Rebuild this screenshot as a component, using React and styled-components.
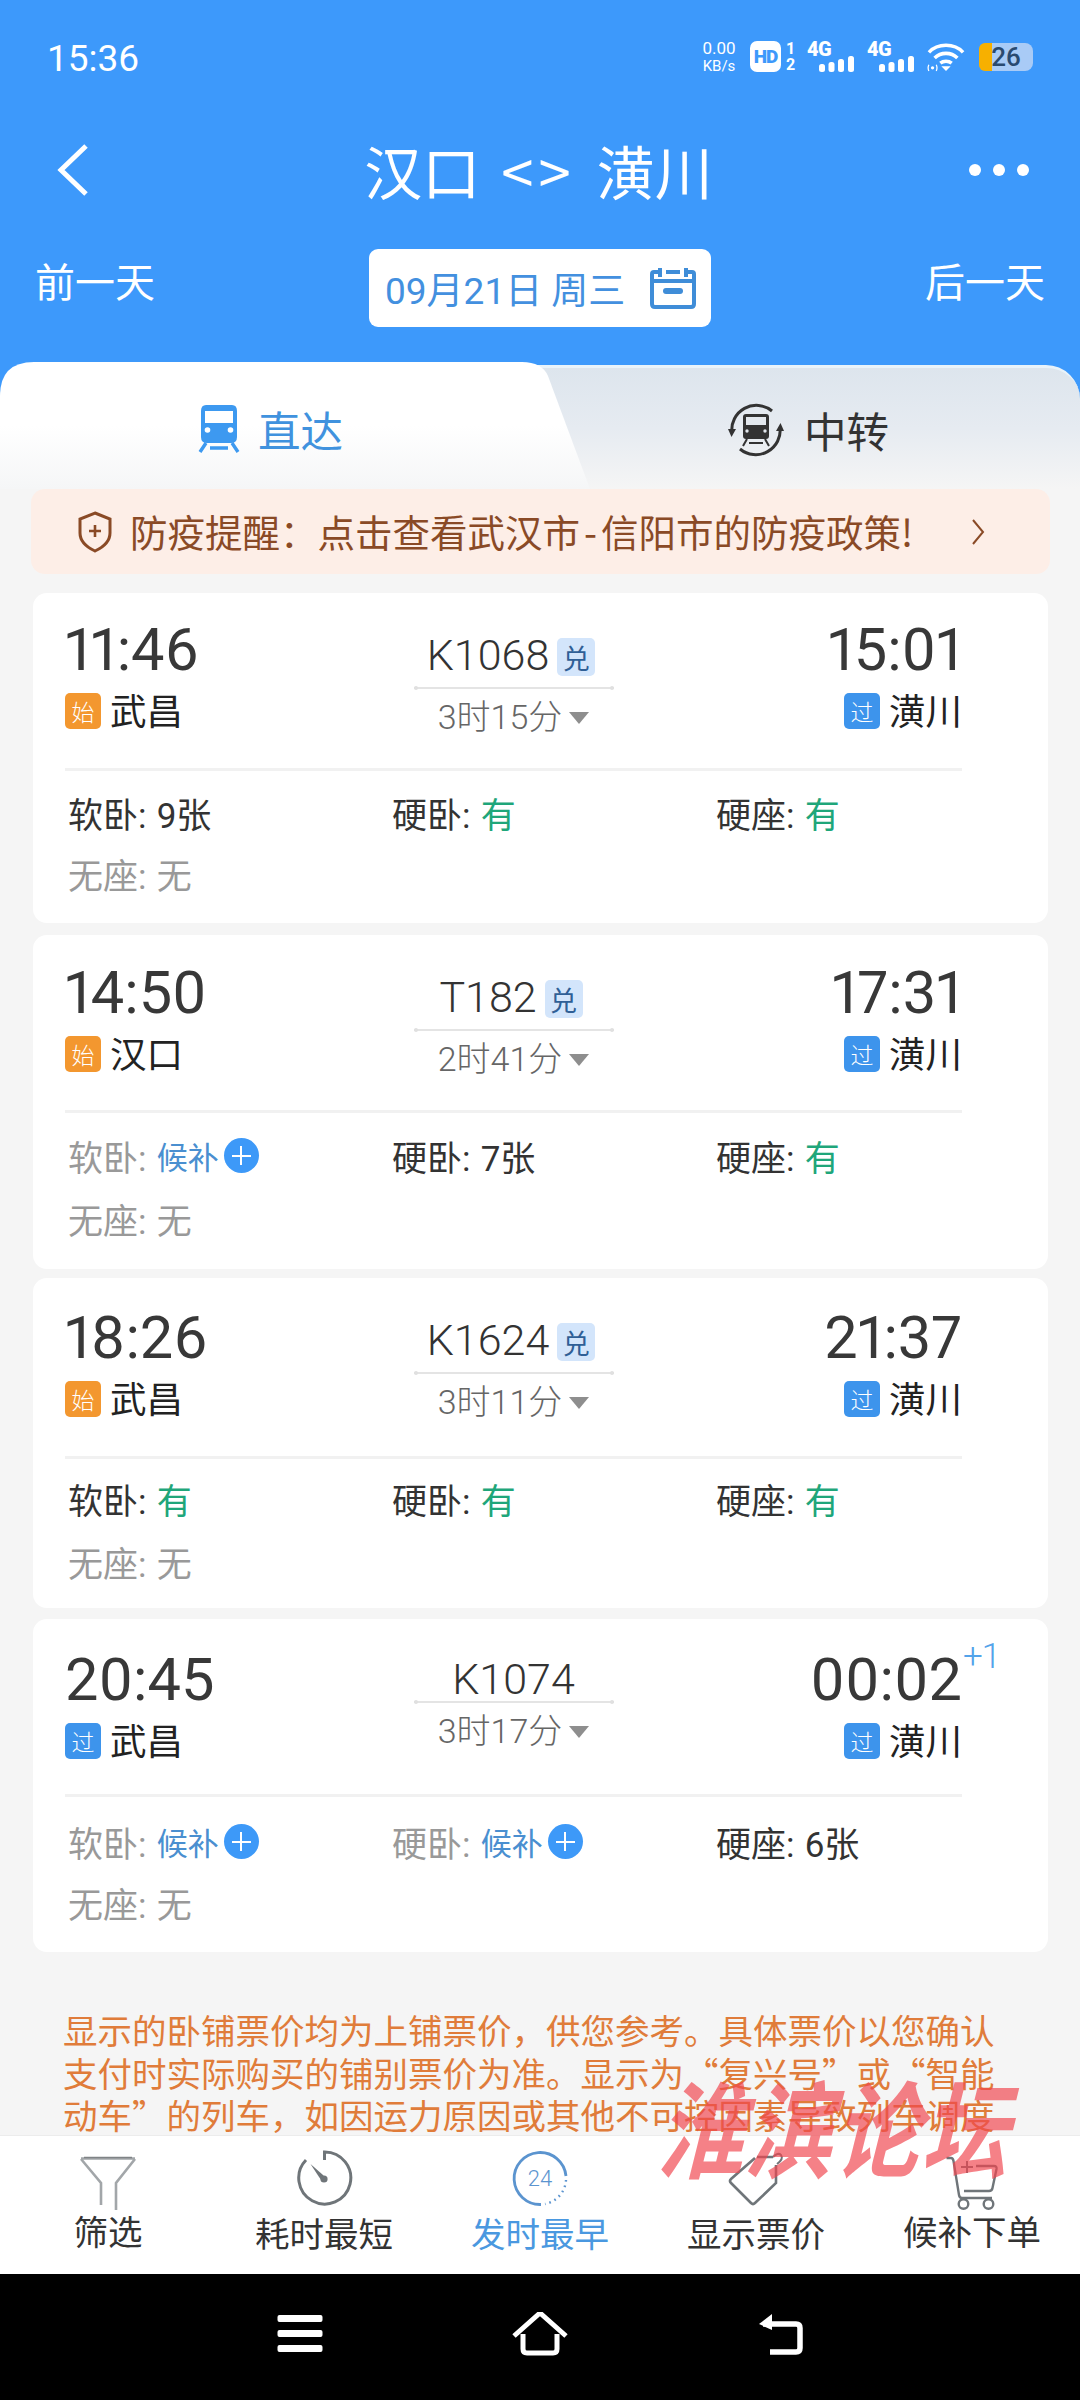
import React from "react";
import styled, { createGlobalStyle } from "styled-components";

const Global = createGlobalStyle`
  html, body { margin: 0; padding: 0; background: #f5f5f5; }
  body { font-family: Roboto, "Noto Sans CJK SC", sans-serif; }
  * { box-sizing: border-box; }
`;

const Page = styled.div`
  position: relative; width: 1080px; height: 2400px; overflow: hidden;
  display: flex; flex-direction: column; background: #f5f5f5; color: #333;
`;
const Top = styled.header`background: #3d99fb; color: #fff; flex: none;`;
const StatusBar = styled.div`
  height: 116px; padding: 0 47px 0 47px; display: flex; align-items: center; justify-content: space-between;
`;
const Clock = styled.span`font-size: 37px; font-weight: 400; letter-spacing: 0;`;
const StatusIcons = styled.div`display: flex; align-items: center; height: 40px; margin-top: -3px;`;
const Speed = styled.div`
  width: 44px; margin-right: 9px; text-align: center; font-weight: 400; line-height: 1;
  span { display: block; font-size: 17px; }
  small { display: block; font-size: 15px; margin-top: 2px; }
`;
const Hd = styled.span`
  width: 31px; height: 31px; border-radius: 7px; background: #fff; color: #3d99fb;
  font-size: 19px; font-weight: 900; display: flex; align-items: center; justify-content: center; letter-spacing: -1px;
`;
const SimNums = styled.div`
  width: 15px; margin-left: 2px; margin-right: 9px; font-size: 16px; font-weight: 700; line-height: 16px; text-align: center;
`;
const Signal = styled.div`position: relative; width: 48px; height: 30px; margin-right: 12px;`;
const SignalLabel = styled.span`
  position: absolute; left: 0; top: -3px; font-size: 20px; font-weight: 900; letter-spacing: -0.5px; line-height: 20px;
`;
const Battery = styled.div`
  position: relative; margin-left: 14px; width: 54px; height: 28px; border-radius: 6px 8px 8px 6px; overflow: hidden;
  background: linear-gradient(90deg, #f7b000 0 13px, #a9cbf6 13px);
  color: #2a4a70; font-size: 26px; font-weight: 500; text-align: center; line-height: 28px;
`;
const NavRow = styled.div`
  height: 108px; padding: 0 50px 0 55px; display: flex; align-items: center; justify-content: space-between;
`;
const Title = styled.h1`
  margin: 0 0 0 18px; font-size: 58px; font-weight: 400; line-height: 108px; white-space: nowrap; word-spacing: 8px;
  font-family: "Noto Sans CJK SC", sans-serif;
`;
const TitleArrows = styled.span`letter-spacing: 5px;`;
const DateRow = styled.div`
  height: 141px; padding: 25px 35px 0 35px; display: flex; align-items: flex-start; justify-content: space-between;
`;
const DayLink = styled.span`
  font-size: 40px; font-weight: 400; line-height: 60px; width: 120px; white-space: nowrap; margin-top: 5px;
`;
const DateBox = styled.div`
  width: 342px; height: 78px; background: #fff; border-radius: 9px; color: #4390df; font-size: 37px; font-weight: 400;
  display: flex; align-items: center; justify-content: space-between; padding: 0 15px 0 16px; white-space: nowrap;
`;
const Tabs = styled.div`
  position: relative; height: 124px; flex: none; display: flex; background: #3d99fb;
`;
const TabGround = styled.div`
  flex: 1; display: flex; border-radius: 34px 34px 0 0; border-top: 3px solid #e9f3fa;
  background: linear-gradient(180deg, #dde5ed 0%, #e6ebf1 50%, #f5f5f5 100%);
`;
const ActiveTab = styled.div`
  flex: 0 0 590px; height: 127px; margin-top: -6px; padding: 6px 0 0 197px;
  display: flex; align-items: center; gap: 17px; color: #4092de; font-size: 42.5px; font-weight: 400;
  background: linear-gradient(180deg, #fff 0%, #fff 50%, #f5f6f7 100%);
  clip-path: path("M0 127 L0 34 Q0 0 34 0 L522 0 Q542 0 548 14 L590 127 Z");
`;
const OtherTab = styled.div`
  flex: 1; padding: 2px 0 0 138px; display: flex; align-items: center; gap: 20px; font-size: 42.5px; font-weight: 400; color: #333;
`;
const Content = styled.main`flex: 1; min-height: 0; overflow: hidden; padding: 0 32px 0 33px;`;
const Banner = styled.div`
  height: 85px; margin: 0 -2px 19px; padding: 0 65px 0 46px; border-radius: 14px; background: #fdeee7; color: #8a4a26;
  display: flex; align-items: center; font-size: 37.5px; font-weight: 400; white-space: nowrap;
`;
const BannerText = styled.span`flex: 1; margin: -2px 0 0 17px; font-family: "Noto Sans CJK SC", sans-serif;`;
const BannerDash = styled.span`margin: 0 4px;`;
const Card = styled.article`
  height: ${p => p.$h}px; margin-bottom: ${p => p.$gap}px; border-radius: 14px; background: #fff; padding: 0 86px 0 32px;
`;
const Head = styled.div`
  height: ${p => p.$h}px; border-bottom: 3px solid #f1f1f1; display: grid; grid-template-columns: 1fr 200px 1fr;
`;
const Side = styled.div`
  padding-top: ${p => p.$top}px; display: flex; flex-direction: column; align-items: ${p => (p.$end ? "flex-end" : "flex-start")};
`;
const Time = styled.div`
  position: relative; font-size: 59.5px; line-height: 70px; font-weight: 400; color: #383838; font-variant-numeric: proportional-nums;
`;
const Plus = styled.span`
  position: absolute; left: 100%; top: -6px; margin-left: 1px; font-size: 35px; line-height: 36px; font-weight: 300; color: #53a3ea;
`;
const Station = styled.div`
  height: 48px; display: flex; align-items: center; gap: 9px; font-size: 36.5px; font-weight: 400; color: #222;
`;
const StopTag = styled.span`
  width: 36px; height: 36px; border-radius: 5px; background: ${p => (p.$start ? "#f3972f" : "#3d94ec")}; color: #fff;
  font-size: 23px; font-weight: 300; display: flex; align-items: center; justify-content: center; margin-top: 3px;
`;
const Middle = styled.div`padding-top: 34px; display: flex; flex-direction: column; align-items: center;`;
const TrainRow = styled.div`
  width: 100%; height: ${p => (p.$compact ? 48 : 60)}px; display: flex; align-items: flex-start; justify-content: center; gap: 8px;
`;
const TrainNo = styled.span`
  font-size: 43px; font-weight: 300; color: #333; line-height: ${p => (p.$compact ? 52 : 56)}px; margin-left: ${p => (p.$compact ? 0 : -5)}px;
`;
const Redeem = styled.span`
  width: 38px; height: 38px; margin-top: 11px; border-radius: 5px; background: #d3e5fb; color: #2f5f96; font-size: 27px;
  display: flex; align-items: center; justify-content: center; font-weight: 400;
`;
const RouteLine = styled.div`
  position: relative; width: 200px; height: 2px; background: #e4e4e4;
  &::before, &::after { content: ""; position: absolute; top: -1px; width: 4px; height: 4px; border-radius: 50%; background: #e0e0e0; }
  &::before { left: 0; } &::after { right: 0; }
`;
const Duration = styled.div`
  height: 50px; display: flex; align-items: center; gap: 7px; font-size: 34px; font-weight: 300; color: #666; white-space: nowrap;
`;
const Caret = styled.i`
  width: 0; height: 0; border-left: 10px solid transparent; border-right: 10px solid transparent; border-top: 12px solid #8e8e8e; margin-top: 7px;
`;
const Seats = styled.div`
  padding: ${p => p.$top}px 0 0 3px; display: grid; grid-template-columns: repeat(3, 324px); grid-auto-rows: ${p => p.$row}px;
`;
const Seat = styled.div`
  display: flex; align-items: center; white-space: pre; word-spacing: 1.5px; font-size: 35px; font-weight: 400; color: ${p => (p.$muted ? "#999" : "#333")};
`;
const SeatValue = styled.span`
  color: ${p => ({ green: "#1fa67a", blue: "#4a8fd0", gray: "#999", dark: "#333" }[p.$tone])};
  font-size: ${p => (p.$tone === "blue" ? 31 : 35)}px;
`;
const AddCircle = styled.span`
  width: 35px; height: 35px; margin-left: 5px; border-radius: 50%; background: #3d99f8; position: relative; flex: none;
  &::before, &::after { content: ""; position: absolute; background: #fff; }
  &::before { left: 8px; right: 8px; top: 16.5px; height: 2px; }
  &::after { top: 8px; bottom: 8px; left: 16.5px; width: 2px; }
`;
const Note = styled.p`
  margin: 56px 0 0 30px; color: #e07c3a; font-size: 34.5px; line-height: 42.5px; white-space: nowrap; font-weight: 400;
  font-family: "Noto Sans CJK SC", sans-serif;
`;
const BottomBar = styled.nav`
  flex: none; height: 139px; background: #fff; border-top: 1px solid #ececec; display: grid; grid-template-columns: repeat(5, 216px); padding-top: 13px;
`;
const BarItem = styled.div`
  display: flex; flex-direction: column; align-items: center; color: ${p => (p.$active ? "#4a98e0" : "#333")};
  font-size: 34.5px; font-weight: 400; white-space: nowrap;
`;
const BarLabel = styled.span`line-height: 44px; margin-top: ${p => (p.$high ? 0 : 6)}px;`;
const SystemNav = styled.div`
  flex: none; height: 126px; background: #000; display: flex; align-items: flex-start; justify-content: center; gap: 180px; padding-top: 38px;
`;
const Watermark = styled.div`
  position: absolute; left: 668px; top: 2070px; font-size: 86px; line-height: 110px; font-weight: 700; letter-spacing: 2px;
  color: rgba(240, 70, 78, .68); transform: skewX(-14deg) scaleY(1.22); white-space: nowrap; pointer-events: none;
  font-family: "Noto Sans CJK SC", sans-serif;
`;

const Bars = () => (
  <svg width="36" height="16" viewBox="0 0 36 16" style={{ position: "absolute", left: 12, bottom: 0 }} fill="#fff">
    <rect x="0" y="8" width="6" height="8" rx="2.5" />
    <rect x="9.5" y="6" width="6" height="10" rx="2.5" />
    <rect x="19" y="3" width="6" height="13" rx="2.5" />
    <rect x="29" y="0" width="6" height="16" rx="2.5" />
  </svg>
);
const Wifi = () => (
  <svg width="38" height="30" viewBox="0 0 36 29" fill="none" stroke="#fff" strokeWidth="3.4">
    <path d="M1.5 10 C10 1 26 1 34.5 10" />
    <path d="M7 15.5 C13 9.5 23 9.5 29 15.5" />
    <path d="M12.5 20.5 C15.5 18 20.5 18 23.5 20.5" />
    <path d="M18 28 L13.5 23.5 H22.5 Z" fill="#fff" stroke="none" />
    <circle cx="5" cy="25" r="1.6" fill="#fff" stroke="none" />
    <path d="M1.4 22 Q0 25 1.4 28 M8.6 22 Q10 25 8.6 28" strokeWidth="1.2" />
  </svg>
);
const Back = () => (
  <svg width="36" height="52" viewBox="0 0 36 52" fill="none" stroke="#fff" strokeWidth="5">
    <path d="M31 2 L6 26 L31 50" />
  </svg>
);
const Dots = () => (
  <svg width="62" height="14" viewBox="0 0 62 14" fill="#fff">
    <circle cx="7" cy="7" r="6" /><circle cx="31" cy="7" r="6" /><circle cx="55" cy="7" r="6" />
  </svg>
);
const Calendar = () => (
  <svg width="46" height="44" viewBox="0 0 46 42" fill="none" stroke="#3f8dd8" strokeWidth="4">
    <path d="M10 5 H4 Q2 5 2 7 V37 Q2 40 5 40 H41 Q44 40 44 37 V7 Q44 5 42 5 H36" />
    <path d="M10 1 V10 M36 1 V10 M16 5 H30" />
    <rect x="3" y="12" width="40" height="4" fill="#3f8dd8" stroke="none" />
    <rect x="13" y="21" width="20" height="6" rx="3" fill="#3f8dd8" stroke="none" />
  </svg>
);
const TrainIcon = () => (
  <svg width="44" height="48" viewBox="0 0 42 48">
    <path d="M8 0 H34 Q39 0 39 6 V32 Q39 38 33 38 H9 Q3 38 3 32 V6 Q3 0 8 0 Z" fill="#3d99f0" />
    <rect x="7" y="6" width="28" height="12" fill="#fff" />
    <circle cx="9.5" cy="25" r="2.8" fill="#fff" /><circle cx="32.5" cy="25" r="2.8" fill="#fff" />
    <path d="M8 38 L2 47 M34 38 L40 47 M12 43 H30" stroke="#3d99f0" strokeWidth="3.4" fill="none" />
  </svg>
);
const TransferIcon = () => (
  <svg width="56" height="56" viewBox="0 0 56 56" fill="none">
    <path d="M4 31 A24.5 24.5 0 0 1 44 9" stroke="#333" strokeWidth="3" />
    <path d="M52 25 A24.5 24.5 0 0 1 12 47" stroke="#333" strokeWidth="3" />
    <path d="M0 27 L8 27 L3.5 35 Z M56 29 L48 29 L52.5 21 Z" fill="#333" />
    <path d="M18 12 H38 Q41 12 41 15 V34 Q41 37 38 37 H18 Q15 37 15 34 V15 Q15 12 18 12 Z" fill="#333" />
    <rect x="18" y="15" width="20" height="8" fill="#e3e8ee" />
    <circle cx="19" cy="29" r="1.7" fill="#e3e8ee" /><circle cx="37" cy="29" r="1.7" fill="#e3e8ee" />
    <path d="M19 37 L15 44 M37 37 L41 44 M21 41 H35" stroke="#333" strokeWidth="2" />
  </svg>
);
const Shield = () => (
  <svg width="36" height="42" viewBox="0 0 36 42" fill="none" stroke="#8a4a26" strokeWidth="3">
    <path d="M18 2 L33 8 V22 Q33 33 18 40 Q3 33 3 22 V8 Z" />
    <path d="M18 14 V26 M12 20 H24" strokeWidth="2.6" />
  </svg>
);
const Chevron = () => (
  <svg width="14" height="28" viewBox="0 0 14 28" fill="none" stroke="#8a4a26" strokeWidth="2">
    <path d="M2 2 L12 14 L2 26" />
  </svg>
);
const FilterIcon = () => (
  <svg width="60" height="62" viewBox="0 0 60 62" fill="none" stroke="#a2a6a9" strokeWidth="2.6">
    <path d="M3 9.5 H57 M3 10 L23 34 V56 M57 10 L38 34 V61" />
    <path d="M6 8.5 H54" stroke="#7f8386" strokeWidth="1.4" />
  </svg>
);
const ClockIcon = () => (
  <svg width="60" height="58" viewBox="0 0 60 58" fill="none" stroke="#6f7579" strokeWidth="3">
    <path d="M30.5 11 V3 A26 26 0 1 1 12 11" />
    <path d="M16.5 15 L29 26 L32 30 L28 32 L25 28 Z" fill="#6f7579" stroke="none" />
    <circle cx="30" cy="30" r="3.6" fill="#6f7579" stroke="none" />
  </svg>
);
const EarliestIcon = () => (
  <svg width="60" height="58" viewBox="0 0 60 58" fill="none" stroke="#5b94cf" strokeWidth="2.8">
    <path d="M56 27 A26 26 0 1 0 31 55.5" />
    <path d="M56 31 A26 26 0 0 1 35 55" strokeDasharray="1.6 4" strokeWidth="2.4" />
    <text x="30" y="37" textAnchor="middle" fontSize="22" fontFamily="Roboto, sans-serif" fontWeight="300" fill="#5b94cf" stroke="none">24</text>
  </svg>
);
const PriceIcon = () => (
  <svg width="60" height="58" viewBox="0 0 60 58" fill="none" stroke="#6f7579" strokeWidth="2.6">
    <path d="M31 8 H47 M29 9 L5 30 Q3 32 5 34 L25 54 Q27 56 29 54 L50 34 V16" />
    <path d="M47 8 Q52 3 55 6 Q58 10 51 15" strokeWidth="2" />
  </svg>
);
const CartIcon = () => (
  <svg width="60" height="62" viewBox="0 0 60 62" fill="none" stroke="#6f7579" strokeWidth="2.4">
    <path d="M4.5 9 H9 Q11 9 11.5 12 L17 46 Q17.5 49 20 49 H50" />
    <path d="M34 17 H52 Q55 17 54.5 20 L50.5 39 Q50 42 47 42 H22" />
    <path d="M25 12 V24 M19 18 H31" strokeWidth="2" />
    <circle cx="21.5" cy="55" r="4.8" /><circle cx="46.5" cy="55" r="4.8" />
  </svg>
);
const MenuIcon = () => (
  <svg width="60" height="44" viewBox="0 0 60 44" fill="#fff">
    <rect x="7.5" y="3" width="45" height="7" rx="2" /><rect x="7.5" y="18" width="45" height="7" rx="2" /><rect x="7.5" y="33" width="45" height="7" rx="2" />
  </svg>
);
const HomeIcon = () => (
  <svg width="60" height="44" viewBox="0 0 60 44" fill="none" stroke="#fff" strokeWidth="5">
    <path d="M4 24 L30 1 L56 24" />
    <path d="M13 22 V37 Q13 41 17 41 H43 Q47 41 47 37 V22" />
  </svg>
);
const BackIcon = () => (
  <svg width="60" height="44" viewBox="0 0 60 44" fill="none" stroke="#fff" strokeWidth="5.5">
    <path d="M13 12 H46 Q50 12 50 16 V36 Q50 40 46 40 H20" />
    <path d="M22 2 L9 12 L22 18 Z" fill="#fff" stroke="none" />
  </svg>
);

const trains = [
  { dep: "11:46", arr: "15:01", no: "K1068", redeem: true, dur: "3时15分", from: "武昌", start: true, to: "潢川",
    layout: { h: 330, gap: 12, top: 22, head: 178, seatTop: 11, row: 61 },
    seats: [["软卧", "9张", "dark", false], ["硬卧", "有", "green", false], ["硬座", "有", "green", false], ["无座", "无", "gray", true]] },
  { dep: "14:50", arr: "17:31", no: "T182", redeem: true, dur: "2时41分", from: "汉口", start: true, to: "潢川",
    layout: { h: 334, gap: 9, top: 23, head: 178, seatTop: 11, row: 63 },
    seats: [["软卧", "候补", "blue", true, true], ["硬卧", "7张", "dark", false], ["硬座", "有", "green", false], ["无座", "无", "gray", true]] },
  { dep: "18:26", arr: "21:37", no: "K1624", redeem: true, dur: "3时11分", from: "武昌", start: true, to: "潢川",
    layout: { h: 330, gap: 11, top: 25, head: 181, seatTop: 8, row: 63 },
    seats: [["软卧", "有", "green", false], ["硬卧", "有", "green", false], ["硬座", "有", "green", false], ["无座", "无", "gray", true]] },
  { dep: "20:45", arr: "00:02", no: "K1074", redeem: false, dur: "3时17分", from: "武昌", start: false, to: "潢川", nextDay: true,
    layout: { h: 333, gap: 0, top: 26, head: 178, seatTop: 14, row: 61 },
    seats: [["软卧", "候补", "blue", true, true], ["硬卧", "候补", "blue", true, true], ["硬座", "6张", "dark", false], ["无座", "无", "gray", true]] },
];

const TrainCard = ({ t }) => (
  <Card $h={t.layout.h} $gap={t.layout.gap}>
    <Head $h={t.layout.head}>
      <Side $top={t.layout.top}>
        <Time>{t.dep}</Time>
        <Station><StopTag $start={t.start}>{t.start ? "始" : "过"}</StopTag>{t.from}</Station>
      </Side>
      <Middle>
        <TrainRow $compact={!t.redeem}>
          <TrainNo $compact={!t.redeem}>{t.no}</TrainNo>
          {t.redeem && <Redeem>兑</Redeem>}
        </TrainRow>
        <RouteLine />
        <Duration>{t.dur}<Caret /></Duration>
      </Middle>
      <Side $end $top={t.layout.top}>
        <Time>{t.arr}{t.nextDay && <Plus>+1</Plus>}</Time>
        <Station><StopTag>过</StopTag>{t.to}</Station>
      </Side>
    </Head>
    <Seats $top={t.layout.seatTop} $row={t.layout.row}>
      {t.seats.map(([name, value, tone, muted, add]) => (
        <Seat key={name} $muted={muted}>
          {name}: <SeatValue $tone={tone}>{value}</SeatValue>
          {add && <AddCircle />}
        </Seat>
      ))}
    </Seats>
  </Card>
);

export default function App() {
  return (
    <Page>
      <Global />
      <Top>
        <StatusBar>
          <Clock>15:36</Clock>
          <StatusIcons>
            <Speed><span>0.00</span><small>KB/s</small></Speed>
            <Hd>HD</Hd>
            <SimNums>1<br />2</SimNums>
            <Signal><SignalLabel>4G</SignalLabel><Bars /></Signal>
            <Signal><SignalLabel>4G</SignalLabel><Bars /></Signal>
            <Wifi />
            <Battery>26</Battery>
          </StatusIcons>
        </StatusBar>
        <NavRow>
          <Back />
          <Title>汉口 <TitleArrows>&lt;&gt;</TitleArrows> 潢川</Title>
          <Dots />
        </NavRow>
        <DateRow>
          <DayLink>前一天</DayLink>
          <DateBox>09月21日 周三<Calendar /></DateBox>
          <DayLink>后一天</DayLink>
        </DateRow>
      </Top>
      <Tabs>
        <TabGround>
          <ActiveTab><TrainIcon />直达</ActiveTab>
          <OtherTab><TransferIcon />中转</OtherTab>
        </TabGround>
      </Tabs>
      <Content>
        <Banner>
          <Shield />
          <BannerText>防疫提醒：点击查看武汉市<BannerDash>-</BannerDash>信阳市的防疫政策!</BannerText>
          <Chevron />
        </Banner>
        {trains.map(t => <TrainCard key={t.no} t={t} />)}
        <Note>
          显示的卧铺票价均为上铺票价，供您参考。具体票价以您确认<br />
          支付时实际购买的铺别票价为准。显示为“复兴号”或“智能<br />
          动车”的列车，如因运力原因或其他不可控因素导致列车调度
        </Note>
      </Content>
      <BottomBar>
        <BarItem><FilterIcon /><BarLabel $high>筛选</BarLabel></BarItem>
        <BarItem><ClockIcon /><BarLabel>耗时最短</BarLabel></BarItem>
        <BarItem $active><EarliestIcon /><BarLabel>发时最早</BarLabel></BarItem>
        <BarItem><PriceIcon /><BarLabel>显示票价</BarLabel></BarItem>
        <BarItem><CartIcon /><BarLabel $high>候补下单</BarLabel></BarItem>
      </BottomBar>
      <SystemNav>
        <MenuIcon /><HomeIcon /><BackIcon />
      </SystemNav>
      <Watermark>淮滨论坛</Watermark>
    </Page>
  );
}
